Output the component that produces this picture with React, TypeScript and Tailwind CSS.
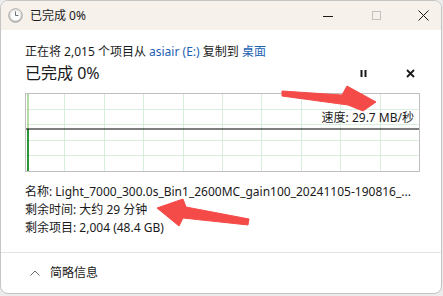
import React from 'react';

const font = "font-['Noto_Sans','Noto_Sans_CJK_SC',sans-serif]";

function ClockIcon() {
  return (
    <svg width="15" height="15" viewBox="0 0 15 15">
      <defs>
        <radialGradient id="rim" cx="50%" cy="40%" r="60%">
          <stop offset="0%" stopColor="#ffffff" />
          <stop offset="70%" stopColor="#e8e8e8" />
          <stop offset="100%" stopColor="#a8a8a8" />
        </radialGradient>
      </defs>
      <circle cx="7.5" cy="7.5" r="6.8" fill="url(#rim)" stroke="#9a9a9a" strokeWidth="0.8" />
      <circle cx="7.5" cy="7.5" r="5.2" fill="#fbfbfb" stroke="#d0d0d0" strokeWidth="0.5" />
      <path d="M7.5 3.8 V7.5 H10" fill="none" stroke="#6d6d6d" strokeWidth="1" strokeLinecap="round" />
    </svg>
  );
}

function Graph() {
  const cols = Array.from({ length: 9 }, (_, i) => Math.round(39.4 * (i + 1)) + 0.5);
  const rows = Array.from({ length: 4 }, (_, i) => Math.round(15.6 * (i + 1)) + 0.5);
  return (
    <div className="relative mt-[9px] h-[79px] w-[395px]">
      <svg width="395" height="79" viewBox="0 0 395 79" className="absolute inset-0">
        {cols.map((x) => (
          <line key={'c' + x} x1={x} y1="1" x2={x} y2="78" stroke="#d6eedb" strokeWidth="1" />
        ))}
        {rows.map((y) => (
          <line key={'r' + y} x1="1" y1={y} x2="394" y2={y} stroke="#d6eedb" strokeWidth="1" />
        ))}
        <rect x="0.5" y="0.5" width="394" height="78" fill="none" stroke="#bfbfbf" strokeWidth="1" />
        <rect x="2" y="1" width="2" height="35" fill="#b5dba4" />
        <rect x="2" y="36" width="2" height="42" fill="#2a9638" />
        <line x1="1" y1="36" x2="394" y2="36" stroke="#000000" strokeWidth="1.2" />
      </svg>
      <span className="absolute right-[6px] top-[16px] text-[12px] leading-[18px] text-[#1a1a1a]">
        速度: 29.7 MB/秒
      </span>
    </div>
  );
}

function Arrows() {
  return (
    <svg width="443" height="296" viewBox="0 0 443 296" className="pointer-events-none absolute left-0 top-0">
      <polygon
        points="282,91 342,95 347,86 376,102 363,111 348,105 282,96"
        fill="#f54b48"
        stroke="#f54b48"
        strokeWidth="1"
        strokeLinejoin="round"
      />
      <polygon
        points="157,208 183,199 186,207 249,219 248,225 183,218 179,226"
        fill="#f54b48"
        stroke="#f54b48"
        strokeWidth="1"
        strokeLinejoin="round"
      />
    </svg>
  );
}

export default function App() {
  return (
    <div className={`relative h-[296px] w-[443px] overflow-hidden bg-[#ececec] ${font}`}>
      <div className="flex h-[294px] w-[442px] flex-col overflow-hidden rounded-[8px] border border-[#c4c4c4] bg-white text-[#1a1a1a]">
        {/* Title bar */}
        <div className="flex h-[29px] shrink-0 items-center bg-[#f7f1ec]">
          <div className="ml-[7px]">
            <ClockIcon />
          </div>
          <span className="ml-[7px] text-[12px]">已完成 0%</span>
          <div className="ml-auto flex items-center">
            <svg width="10" height="10" viewBox="0 0 10 10">
              <line x1="0" y1="5.5" x2="10" y2="5.5" stroke="#1a1a1a" strokeWidth="1" />
            </svg>
            <svg width="9" height="9" viewBox="0 0 9 9" className="ml-[39px]">
              <rect x="0.5" y="0.5" width="8" height="8" fill="none" stroke="#c2c2c2" strokeWidth="1" />
            </svg>
            <svg width="11" height="11" viewBox="0 0 11 11" className="ml-[37px] mr-[12px]">
              <path d="M0.5 0.5 L10.5 10.5 M10.5 0.5 L0.5 10.5" stroke="#1a1a1a" strokeWidth="1" />
            </svg>
          </div>
        </div>

        {/* Body */}
        <div className="flex flex-col px-[24px] pt-[13px]">
          <p className="text-[12px] leading-[18px]">
            正在将 2,015 个项目从 <span className="text-[#1c62b3]">asiair (E:)</span> 复制到{' '}
            <span className="text-[#1c62b3]">桌面</span>
          </p>
          <div className="mt-[1px] flex h-[22px] items-center">
            <span className="text-[16px] leading-[22px]">已完成 0%</span>
            <div className="ml-auto flex items-center">
              <svg width="13" height="13" viewBox="0 0 13 13">
                <rect x="3.5" y="3" width="2" height="7" fill="#1a1a1a" />
                <rect x="7.5" y="3" width="2" height="7" fill="#1a1a1a" />
              </svg>
              <svg width="13" height="13" viewBox="0 0 13 13" className="ml-[34px]">
                <path d="M3 3 L10 10 M10 3 L3 10" stroke="#1a1a1a" strokeWidth="1.8" />
              </svg>
            </div>
          </div>

          <Graph />

          <div className="mt-[11px] flex flex-col text-[12px] leading-[18px]">
            <p className="whitespace-nowrap">名称: Light_7000_300.0s_Bin1_2600MC_gain100_20241105-190816_...</p>
            <p>剩余时间: 大约 29 分钟</p>
            <p>剩余项目: 2,004 (48.4 GB)</p>
          </div>
        </div>

        {/* Footer */}
        <div className="mt-[15px] border-t border-[#e3e3e3]" />
        <div className="flex h-[41px] items-center">
          <svg width="10" height="6" viewBox="0 0 10 6" className="ml-[29px]">
            <path d="M0.5 5.5 L5 1 L9.5 5.5" fill="none" stroke="#6a6a6a" strokeWidth="1" />
          </svg>
          <span className="ml-[10px] text-[12px]">简略信息</span>
        </div>
      </div>
      <Arrows />
    </div>
  );
}
